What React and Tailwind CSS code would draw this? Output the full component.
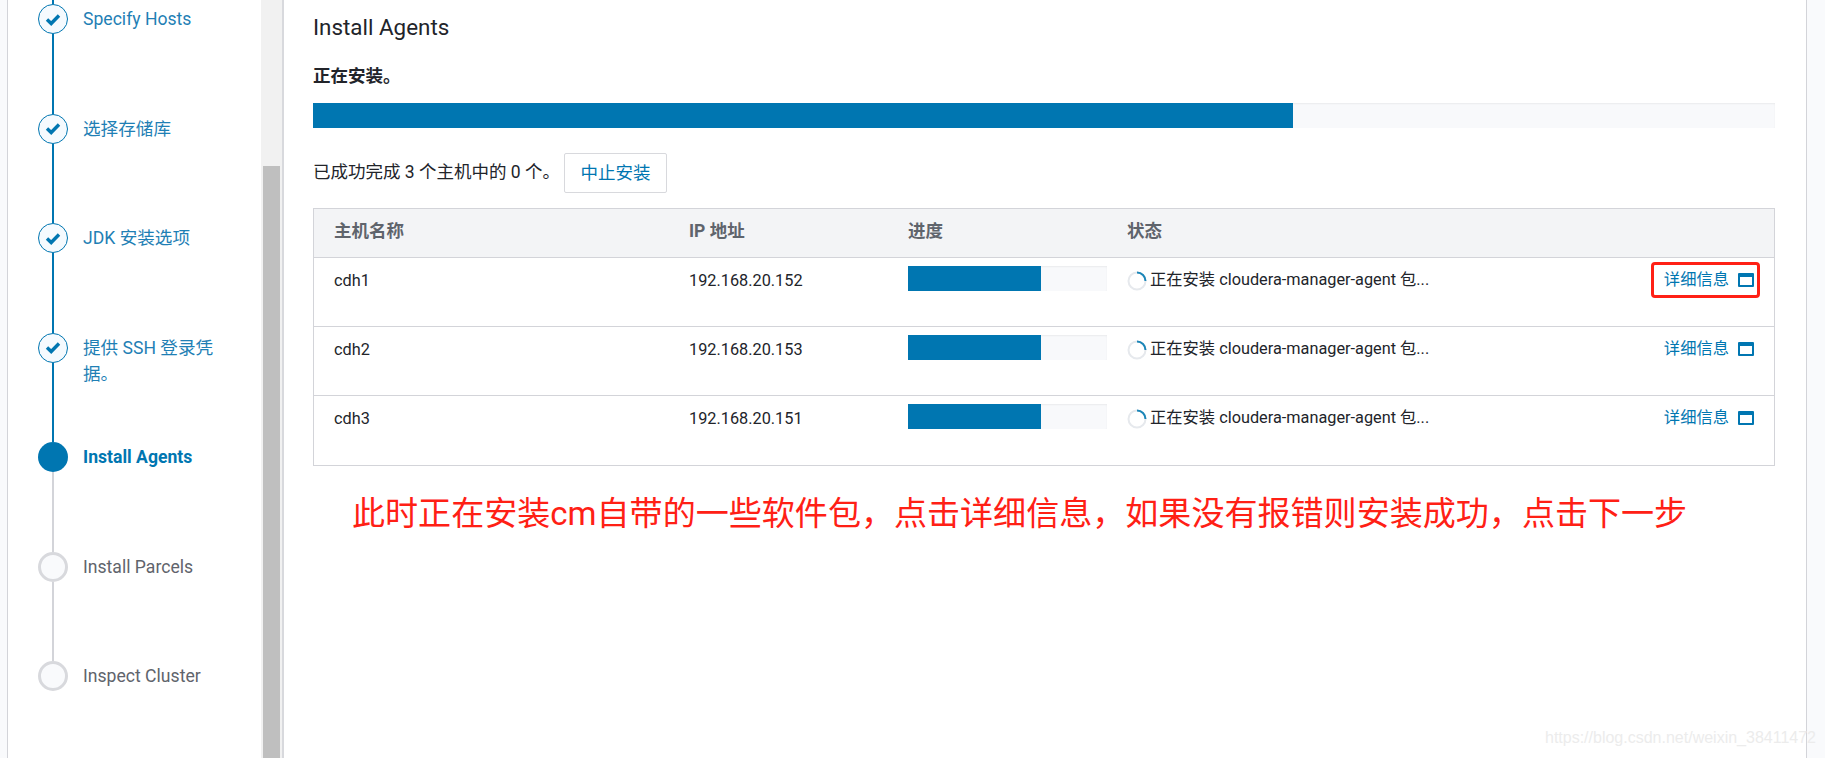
const steps = [
  { label: "Specify Hosts", state: "done" },
  { label: "选择存储库", state: "done" },
  { label: "JDK 安装选项", state: "done" },
  { label: "提供 SSH 登录凭据。", state: "done" },
  { label: "Install Agents", state: "active" },
  { label: "Install Parcels", state: "todo" },
  { label: "Inspect Cluster", state: "todo" },
];

const hosts = [
  { name: "cdh1", ip: "192.168.20.152", marked: true },
  { name: "cdh2", ip: "192.168.20.153" },
  { name: "cdh3", ip: "192.168.20.151" },
];

function Step({ step, last }) {
  const lineBlue = step.state === "done";
  return (
    <div className="flex h-[109.5px] shrink-0">
      <div className="flex w-[30px] shrink-0 flex-col items-center">
        {step.state === "done" && (
          <div className="flex h-[30px] w-[30px] shrink-0 items-center justify-center rounded-full border border-[#0076b1] bg-[#f5fafe]">
            <svg width="16" height="13" viewBox="0 0 16 13">
              <path d="M2 6.5 L6.2 10.5 L14 2.5" fill="none" stroke="#0076b1" strokeWidth="3.4" />
            </svg>
          </div>
        )}
        {step.state === "active" && <div className="h-[30px] w-[30px] shrink-0 rounded-full bg-[#0076b1]"></div>}
        {step.state === "todo" && (
          <div className="h-[30px] w-[30px] shrink-0 rounded-full border-[3px] border-[#d8d9dd] bg-[#f9fafc]"></div>
        )}
        {!last && <div className={lineBlue ? "w-[2px] flex-1 bg-[#0076b1]" : "w-[2px] flex-1 bg-[#d3d4d9]"}></div>}
      </div>
      <div
        className={
          "ml-[15px] mt-[2px] w-[137px] text-[17.6px] leading-[26px] " +
          (step.state === "done"
            ? "text-[#1f7fb5]"
            : step.state === "active"
              ? "font-bold text-[#0076b1]"
              : "text-[#5f646c]")
        }
      >
        {step.label}
      </div>
    </div>
  );
}

function WindowIcon() {
  return (
    <svg width="16" height="14" viewBox="0 0 16 14" className="mb-[1px] ml-[9px] shrink-0">
      <rect x="0" y="0" width="16" height="14" rx="1" fill="#0076b1" />
      <rect x="2" y="4" width="12" height="8" fill="#ffffff" />
    </svg>
  );
}

function Spinner() {
  return (
    <svg width="20" height="20" viewBox="0 0 20 20" className="mr-[2px] shrink-0">
      <circle cx="10" cy="10" r="8.5" fill="none" stroke="#e6e9ed" strokeWidth="2" />
      <path d="M10 1.5 A8.5 8.5 0 0 1 18.5 10" fill="none" stroke="#1b86b8" strokeWidth="2" />
    </svg>
  );
}

function Bar() {
  return (
    <div className="flex h-[25px] w-[199px] bg-[#f8f9fb] shadow-[inset_0_1px_2px_rgba(0,0,0,0.06)]">
      <div className="h-full w-[133px] bg-[#0076b1]"></div>
    </div>
  );
}

function App() {
  return (
    <div
      className="relative flex h-screen w-full overflow-hidden bg-white text-[#22242a]"
      style={{ fontFamily: 'Roboto, "Noto Sans CJK SC", sans-serif' }}
    >
      <div className="w-[7px] shrink-0 bg-[#f9fafc]"></div>

      {/* sidebar */}
      <div className="w-[254px] shrink-0 border-l border-[#d3d4d9] bg-white pl-[30px]">
        <div className="ml-[14px] h-[4px] w-[2px] bg-[#0076b1]"></div>
        {steps.map((s, i) => (
          <Step key={s.label} step={s} last={i === steps.length - 1} />
        ))}
      </div>

      {/* scrollbar */}
      <div className="flex w-[21px] shrink-0 flex-col bg-[#f1f1f1] pl-[2px] pr-[2px]">
        <div className="mt-[166px] flex-1 bg-[#bfbfbf]"></div>
      </div>

      {/* main */}
      <div className="min-w-0 flex-1 border-l-2 border-[#d8d9dd] pl-[29px] pr-[31px]">
        <h2 className="mt-[13px] text-[22.4px] leading-[28px]">Install Agents</h2>
        <div className="mt-[23px] text-[17.5px] font-bold leading-[24px]">正在安装。</div>
        <div className="mt-[15px] flex h-[25px] bg-[#f8f9fb] shadow-[inset_0_1px_2px_rgba(0,0,0,0.06)]">
          <div className="h-full w-[980px] bg-[#0076b1]"></div>
        </div>
        <div className="mt-[25px] flex items-center text-[17.5px]">
          <span className="pb-[2px]">已成功完成 3 个主机中的 0 个。</span>
          <button className="ml-[4px] h-[40px] w-[103px] rounded-[2px] border border-[#d8d9dd] bg-white text-[17.5px] text-[#0076b1]">
            中止安装
          </button>
        </div>

        <div className="mt-[15px] border border-[#d3d4d9] text-[16.3px]">
          <div className="grid h-[49px] grid-cols-[355px_219px_219px_1fr] items-center border-b border-[#d3d4d9] bg-[#f3f4f6] pb-[3px] pl-[20px] text-[17.5px] font-bold text-[#5f646c]">
            <div>主机名称</div>
            <div>IP 地址</div>
            <div>进度</div>
            <div>状态</div>
          </div>
          {hosts.map((h, i) => (
            <div
              key={h.name}
              className={
                "grid h-[69px] grid-cols-[355px_219px_219px_1fr] pl-[20px] pt-[8px] " +
                (i < hosts.length - 1 ? "border-b border-[#d3d4d9]" : "")
              }
            >
              <div className="leading-[29px]">{h.name}</div>
              <div className="leading-[29px]">{h.ip}</div>
              <Bar />
              <div className="flex h-[29px] items-center pr-[20px]">
                <Spinner />
                <span className="ml-[1px]">正在安装 cloudera-manager-agent 包...</span>
                <div className="relative ml-auto flex items-center text-[#0076b1]">
                  <span>详细信息</span>
                  <WindowIcon />
                  {h.marked && (
                    <div className="absolute -bottom-[5px] -left-[13px] -right-[6px] -top-[6px] rounded-[4px] border-[3px] border-[#ff2015]"></div>
                  )}
                </div>
              </div>
            </div>
          ))}
        </div>

        <div className="mt-[23px] pl-[39px] text-[33.05px] leading-[50px] text-[#ff2015]">
          此时正在安装cm自带的一些软件包，点击详细信息，如果没有报错则安装成功，点击下一步
        </div>
      </div>

      <div className="w-[19px] shrink-0 border-l border-[#d3d4d9] bg-[#f9fafc]"></div>

      {/* watermark */}
      <div
        className="absolute bottom-[8px] right-[9px] text-[16px] text-[#ececec]"
        style={{ fontFamily: '"Liberation Sans", sans-serif' }}
      >
        https://blog.csdn.net/weixin_38411472
      </div>
    </div>
  );
}

export default App;
